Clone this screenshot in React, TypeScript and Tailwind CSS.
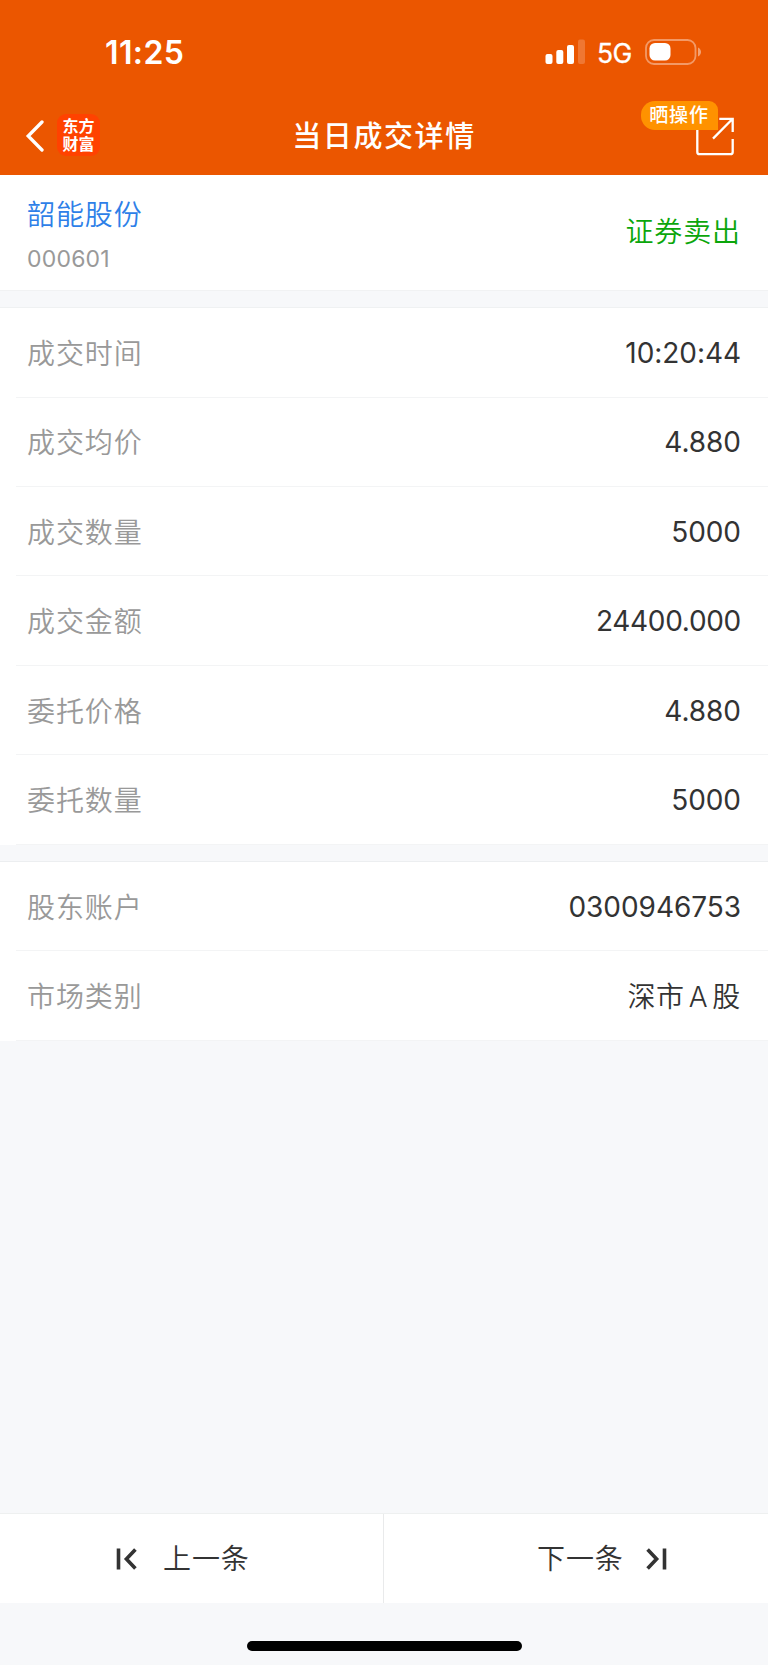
import React from "react";

const tradeRows = [
  { label: "成交时间", value: "10:20:44" },
  { label: "成交均价", value: "4.880" },
  { label: "成交数量", value: "5000" },
  { label: "成交金额", value: "24400.000", tight: true },
  { label: "委托价格", value: "4.880" },
  { label: "委托数量", value: "5000" },
];

const accountRows = [
  { label: "股东账户", value: "0300946753" },
  { label: "市场类别", value: "深市 A 股", cjk: true },
];

type Row = { label: string; value: string; cjk?: boolean; tight?: boolean };

function valueClass(row: Row) {
  if (row.cjk) return "text-[28px] font-[350] tracking-[0.7px] text-[#333] [word-spacing:-4.6px]";
  if (row.tight) return "pb-[2px] text-[28px] tracking-[-0.3px] text-[#333]";
  return "pb-[2px] text-[28px] tracking-[-0.05px] text-[#333]";
}

function Rows({ rows }: { rows: Row[] }) {
  return (
    <div className="bg-white pl-4">
      {rows.map((row) => (
        <div
          key={row.label}
          className="flex h-[89.4px] items-center justify-between border-b border-[#f3f4f5] pt-[3px] pr-[27px] pl-[11px] leading-none"
        >
          <span className="text-[28px] font-[350] tracking-[0.9px] text-[#999]">{row.label}</span>
          <span className={valueClass(row)}>{row.value}</span>
        </div>
      ))}
    </div>
  );
}

function StatusBar() {
  return (
    <div className="flex h-[102px] shrink-0 items-start justify-between pt-[36px] pr-[66px] pl-[105px] text-white">
      <span className="text-[32px] leading-[34px] font-semibold tracking-[0.4px]">11:25</span>
      <div className="flex items-start">
        <svg className="mt-[3px] h-[25px] w-[40px]" viewBox="0 0 40 25" fill="white">
          <rect x="0.5" y="15" width="7" height="10" rx="2" />
          <rect x="11.3" y="11" width="7" height="14" rx="2" />
          <rect x="22" y="6" width="7" height="19" rx="2" />
          <rect x="33" y="0.5" width="7" height="24.5" rx="2" opacity="0.2" />
        </svg>
        <span className="ml-[12px] w-[37px] text-[26.5px] leading-[34px] tracking-[-0.6px] [-webkit-text-stroke:0.3px_white]">5G</span>
        <svg className="mt-[3px] ml-[11px] h-[26px] w-[57px]" viewBox="0 0 57 26">
          <rect x="1" y="1" width="49.5" height="24" rx="8" fill="none" stroke="white" strokeWidth="1.8" opacity="0.4" />
          <rect x="4.5" y="4" width="21" height="17.5" rx="5.5" fill="white" />
          <path d="M53 8.5c4 1.8 4 7.2 0 9z" fill="white" opacity="0.45" />
        </svg>
      </div>
    </div>
  );
}

function StepIcon({ flipped = false }: { flipped?: boolean }) {
  return (
    <svg
      className={flipped ? "h-[22px] w-[23px] -scale-x-100" : "h-[22px] w-[23px]"}
      viewBox="0 0 23 22"
      fill="none"
      stroke="#333"
      strokeWidth="3.6"
    >
      <path d="M3.5 .5v21M20.4 1.4 11.4 11l9 9.6" />
    </svg>
  );
}

export default function App() {
  return (
    <div className="flex h-[1665px] w-[768px] flex-col overflow-hidden bg-[#f7f8fa] font-['Inter','Noto_Sans_CJK_SC',sans-serif]">
      <header className="flex h-[174.5px] shrink-0 flex-col bg-[#eb5600]">
        <StatusBar />
        <div className="grid h-[68px] grid-cols-3 items-center text-white">
          <div className="flex items-center pl-[25px]">
            <svg className="mb-[1px] h-[32px] w-[19px]" viewBox="0 0 19 32" fill="none" stroke="white" strokeWidth="3.3" strokeLinecap="round" strokeLinejoin="miter">
              <path d="M17 2 3.2 16 17 30" />
            </svg>
            <div className="mb-[2px] ml-[13px] flex h-[42px] w-[43px] flex-col items-center justify-center rounded-[9px] bg-[#ff4200] pb-[3px] font-['Noto_Sans_CJK_SC',sans-serif] text-[16px] leading-[18px] font-bold">
              <span>东方</span>
              <span>财富</span>
            </div>
          </div>
          <h1 className="text-center text-[29px] leading-none font-medium tracking-[1.6px]">当日成交详情</h1>
          <div className="relative h-full">
            <svg className="absolute top-[14px] left-[182px] h-[40px] w-[42px]" viewBox="0 0 42 40" fill="none" stroke="white" strokeWidth="2.3">
              <path d="M3.3 11v25q0 2.2 2.2 2.2h31q2.2 0 2.2-2.2V23M25.3 2.8h13.4v13.2M38.2 3.3 19 22.6" />
            </svg>
            <div className="absolute top-[-1px] left-[129px] flex h-[29px] w-[77px] items-center justify-center rounded-tl-[14px] rounded-tr-[9px] rounded-bl-[14px] bg-[#ff9200] pr-[1px] text-[19px] leading-none font-medium tracking-[0.9px]">
              晒操作
            </div>
          </div>
        </div>
      </header>

      <section className="flex h-[116.5px] shrink-0 items-center justify-between border-b border-[#f1f2f3] bg-white pr-[27px] pl-[27px]">
        <div className="pt-[7px]">
          <div className="text-[28px] leading-[40px] font-[350] tracking-[0.9px] text-[#2e7fe8]">韶能股份</div>
          <div className="mt-[6px] text-[23px] leading-[36px] tracking-[0.2px] text-[#999]">000601</div>
        </div>
        <div className="text-[28px] leading-none font-[350] tracking-[0.9px] text-[#0ba60b]">证券卖出</div>
      </section>
      <div className="h-[17.3px] shrink-0 border-b border-[#eff1f2]" />
      <Rows rows={tradeRows} />
      <div className="h-[17.2px] shrink-0 border-b border-[#eceef0]" />
      <Rows rows={accountRows} />

      <footer className="mt-auto h-[152px] shrink-0">
        <div className="flex h-[90px] border-t border-[#eef0f0] bg-white text-[28px] leading-none font-[350] tracking-[0.9px] text-[#333]">
          <div className="flex w-[384px] items-center border-r border-[#e9eaeb] pl-[115px]">
            <StepIcon />
            <span className="ml-[25px] pt-[1px]">上一条</span>
          </div>
          <div className="flex flex-1 items-center pl-[153px]">
            <span className="mr-[21px] pt-[1px]">下一条</span>
            <StepIcon flipped />
          </div>
        </div>
        <div className="mx-auto mt-[38px] h-[9.5px] w-[275px] rounded-full bg-black" />
      </footer>
    </div>
  );
}
